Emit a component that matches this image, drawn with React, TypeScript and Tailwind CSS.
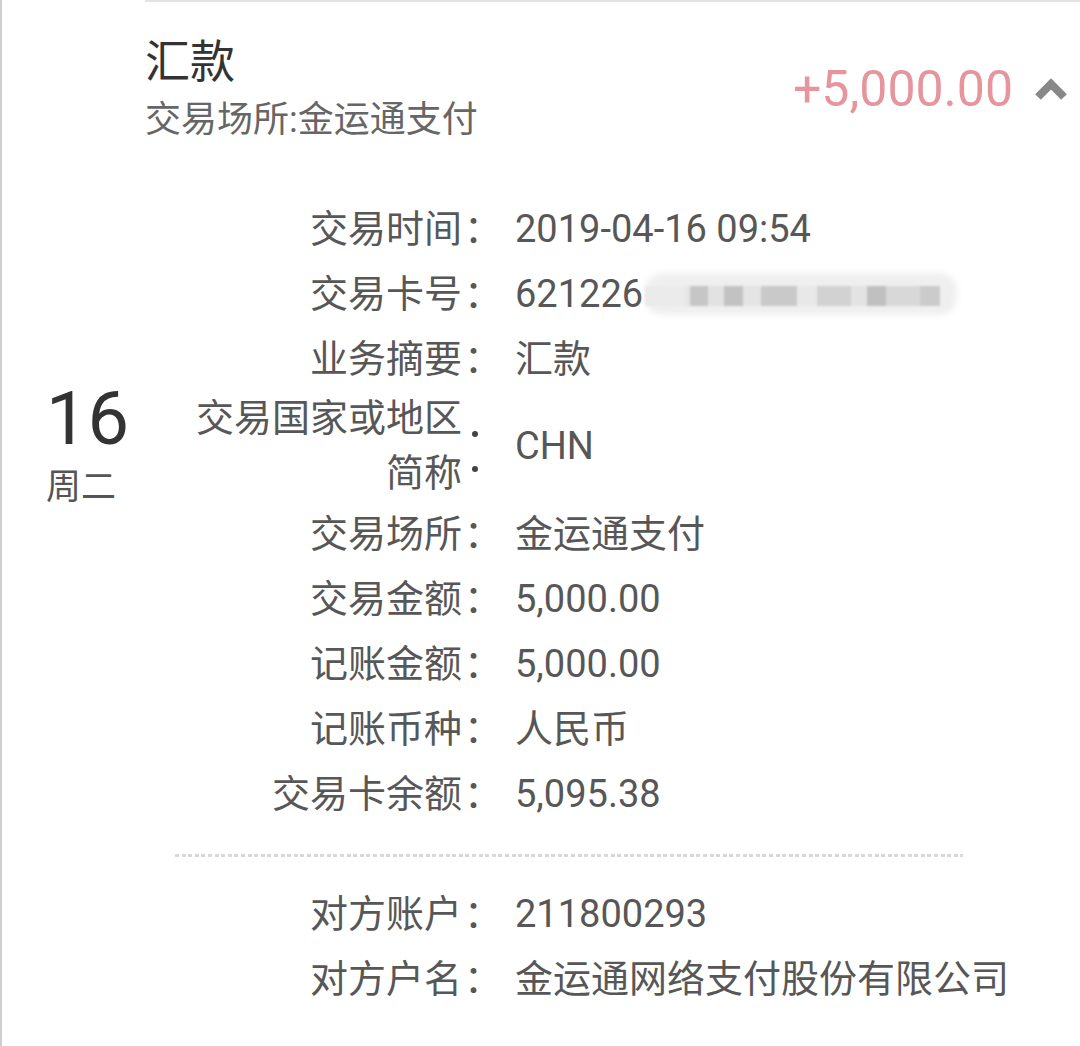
import React from "react";

function Row({ label, value }: { label: React.ReactNode; value: React.ReactNode }) {
  return (
    <div className="flex h-[65px] items-center">
      <div className="w-[317px] text-right text-[38px] leading-none whitespace-nowrap">{label}</div>
      <div className="w-[38px] text-[38px] leading-none pl-[2px]">：</div>
      <div className="ml-[15px] text-[38px] leading-none whitespace-nowrap flex items-center">{value}</div>
    </div>
  );
}

function Mosaic() {
  return (
    <div className="relative ml-[2px] h-[50px] w-[316px]">
      <div className="absolute left-0 top-[4px] h-[42px] w-[312px] rounded-[18px] bg-[#efefef] blur-[3px]" />
      <div className="absolute left-[0px] top-[17px] flex h-[20px] items-stretch blur-[1px]">
        <div className="w-[40px] bg-[#ebebeb]" />
        <div className="w-[5px] bg-[#e6e6e6]" />
        <div className="w-[18px] bg-[#c6c6c6]" />
        <div className="w-[16px] bg-[#e2e2e2]" />
        <div className="w-[19px] bg-[#c2c2c2]" />
        <div className="w-[18px] bg-[#e4e4e4]" />
        <div className="w-[36px] bg-[#c9c9c9]" />
        <div className="w-[20px] bg-[#e8e8e8]" />
        <div className="w-[34px] bg-[#d2d2d2]" />
        <div className="w-[16px] bg-[#e3e3e3]" />
        <div className="w-[19px] bg-[#c0c0c0]" />
        <div className="w-[34px] bg-[#d8d8d8]" />
        <div className="w-[20px] bg-[#cbcbcb]" />
      </div>
    </div>
  );
}

export default function App() {
  return (
    <div className="flex h-[1046px] w-[1080px] bg-white border-l-2 border-[#cfcfcf] font-['Roboto','Noto_Sans_CJK_SC',sans-serif] text-[#575757] overflow-hidden">
      <div className="w-[143px] shrink-0 pl-[44px] pt-[382px]">
        <div className="text-[74px] leading-none text-[#333]">16</div>
        <div className="mt-[10px] text-[35px] leading-none text-[#555] font-['Noto_Sans_CJK_SC',sans-serif]">周二</div>
      </div>
      <div className="flex-1 border-t-2 border-[#e3e3e3]">
        <div className="flex justify-between">
          <div className="pt-[38px]">
            <div className="text-[45px] leading-none text-[#333]">汇款</div>
            <div className="mt-[17px] text-[36px] leading-none text-[#666]">交易场所:金运通支付</div>
          </div>
          <div className="flex items-center pt-[62px] self-start">
            <div className="text-[50px] leading-none text-[#e6959c]">+5,000.00</div>
            <svg className="ml-[22px] mr-[13px]" width="32" height="26" viewBox="0 0 32 26">
              <path d="M3 21 L16 8 L29 21" fill="none" stroke="#888" strokeWidth="8" strokeLinejoin="miter" />
            </svg>
          </div>
        </div>
        <div className="mt-[58px]">
          <Row label="交易时间" value="2019-04-16 09:54" />
          <Row
            label="交易卡号"
            value={
              <>
                <span>621226</span>
                <Mosaic />
              </>
            }
          />
          <Row label="业务摘要" value="汇款" />
          <div className="flex h-[110px] items-center">
            <div className="w-[317px] text-right text-[38px] leading-[55px]">
              <div>交易国家或地区</div>
              <div>简称</div>
            </div>
            <div className="w-[38px] flex flex-col gap-[29px] pl-[10px] mt-[10px]">
              <span className="block h-[6px] w-[6px] rounded-full bg-[#444]" />
              <span className="block h-[6px] w-[6px] rounded-full bg-[#444]" />
            </div>
            <div className="ml-[15px] text-[38px] leading-none">CHN</div>
          </div>
          <Row label="交易场所" value="金运通支付" />
          <Row label="交易金额" value="5,000.00" />
          <Row label="记账金额" value="5,000.00" />
          <Row label="记账币种" value="人民币" />
          <Row label="交易卡余额" value="5,095.38" />
        </div>
        <div className="mt-[28px] ml-[30px] h-[3px] w-[788px] bg-[repeating-linear-gradient(90deg,#d8d8d8_0px,#d8d8d8_4px,transparent_4px,transparent_6.6px)]" />
        <div className="mt-[24px]">
          <Row label="对方账户" value="211800293" />
          <Row label="对方户名" value="金运通网络支付股份有限公司" />
        </div>
      </div>
    </div>
  );
}
